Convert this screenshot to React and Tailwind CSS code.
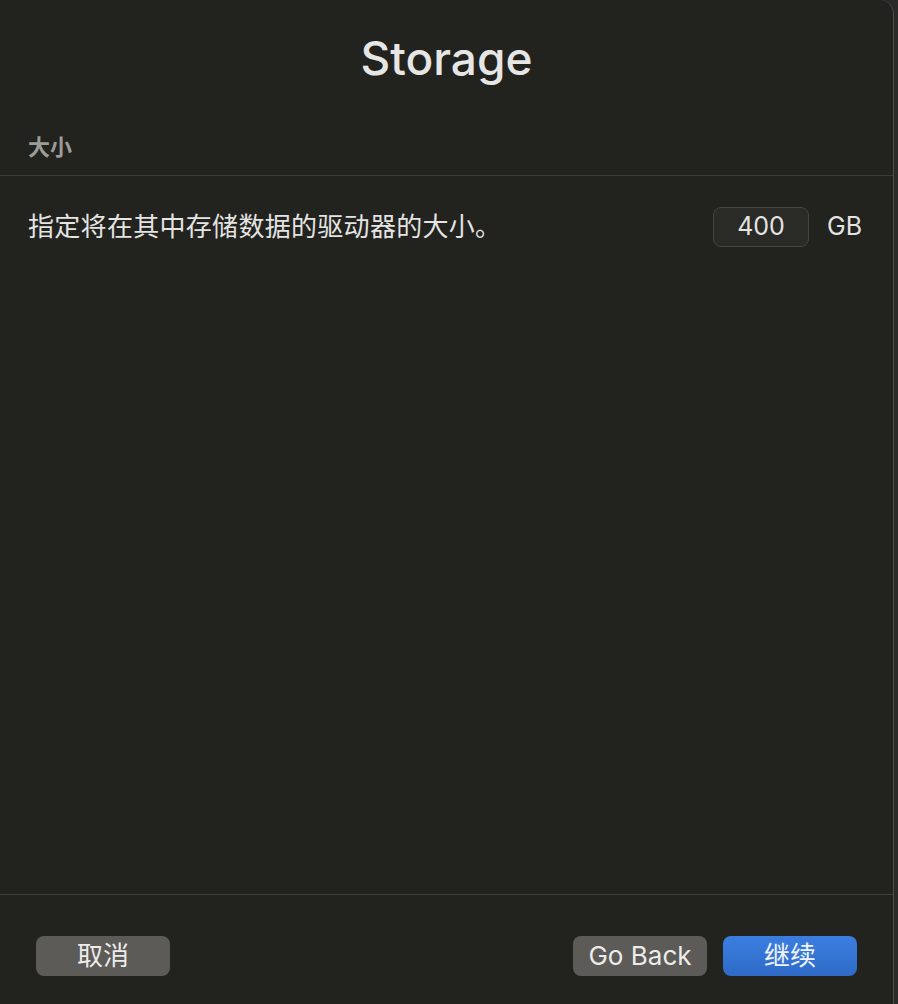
export default function App() {
  const font = { fontFamily: '"Inter", "Noto Sans CJK SC", sans-serif' };
  return (
    <div className="h-[1004px] w-[898px] bg-[#2a2a28]" style={font}>
      <div className="flex h-full w-[894px] flex-col rounded-tr-[14px] border-r border-[#4e4e4b] bg-[#22221f]">
        <h1 className="pt-[28px] text-center text-[46px] leading-[60px] font-medium text-[#e6e6e4]">Storage</h1>

        <div className="px-[28px] pt-[45px] pb-[14px] text-[22px] leading-[28px] font-semibold text-[#9c9c99]">大小</div>
        <div className="h-px bg-[#3d3d3a]" />

        <div className="flex items-center pl-[28px] pr-[31px] pt-[31px]">
          <p className="flex-1 text-[26px] leading-[40px] tracking-[0.3px] text-[#e4e4e2]">指定将在其中存储数据的驱动器的大小。</p>
          <div className="flex h-[40px] w-[96px] items-center justify-center rounded-[8px] border border-[#454542] bg-[#2a2a27] text-[25px] text-[#e4e4e2]">
            400
          </div>
          <span className="ml-[18px] text-[25px] text-[#e4e4e2]">GB</span>
        </div>

        <div className="flex-1" />

        <div className="h-px bg-[#3d3d3a]" />
        <div className="flex items-center px-[36px] pt-[41px] pb-[28px]">
          <button className="h-[40px] w-[134px] rounded-[8px] bg-[#5c5b58] pb-[3px] text-[26px] text-[#ececea]">取消</button>
          <div className="flex-1" />
          <button className="h-[40px] w-[134px] rounded-[8px] bg-[#5c5b58] pb-[3px] text-[26px] text-[#ececea]">Go Back</button>
          <button className="ml-[16px] h-[40px] w-[134px] rounded-[8px] bg-gradient-to-b from-[#3b7ee0] to-[#2f6bc8] pb-[3px] text-[26px] text-[#eef3fc]">继续</button>
        </div>
      </div>
    </div>
  );
}
